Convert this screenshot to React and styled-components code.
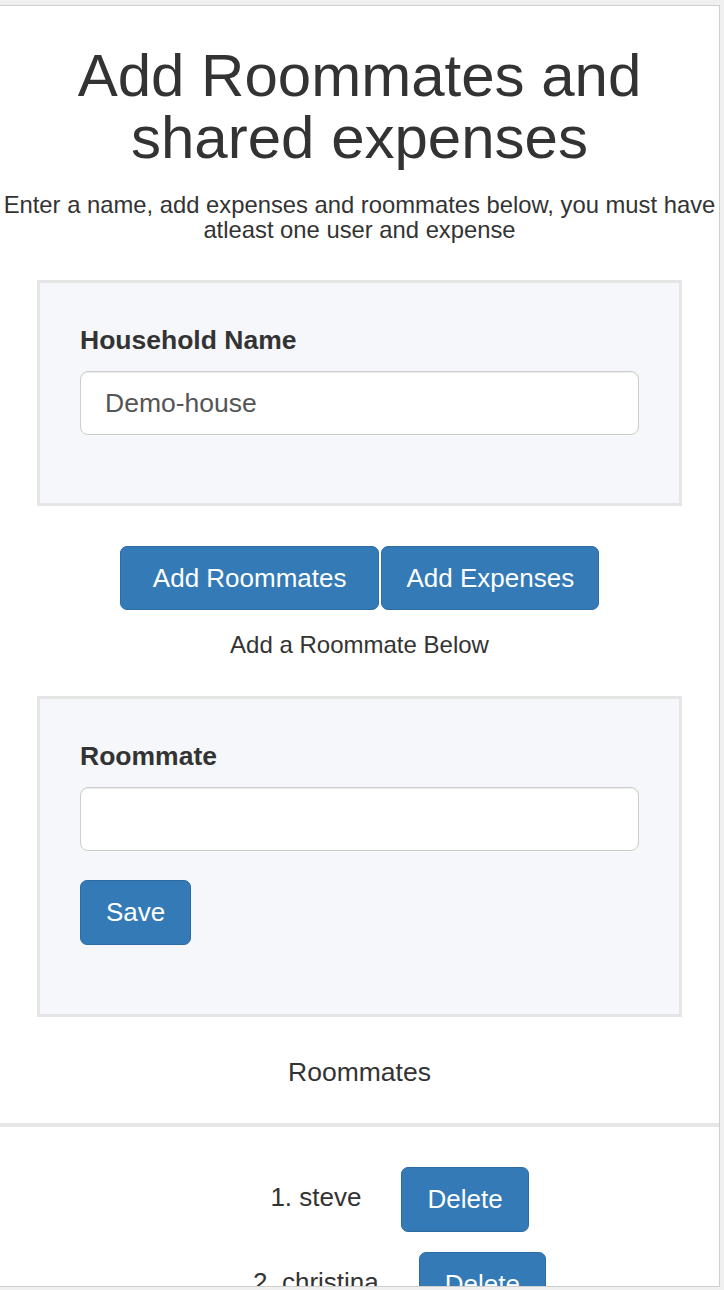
import styled, { createGlobalStyle } from "styled-components";

const GlobalStyle = createGlobalStyle`
  html, body {
    margin: 0;
    padding: 0;
    background: #f0f0f0;
  }
  * {
    box-sizing: border-box;
  }
`;

const Frame = styled.div`
  width: 720px;
  height: 1282px;
  margin-top: 5px;
  background: #fff;
  border-top: 1px solid #cfcfcf;
  border-right: 1px solid #cfcfcf;
  border-bottom: 1px solid #cfcfcf;
  overflow: hidden;
  font-family: "Liberation Sans", Arial, sans-serif;
  color: #333;
  text-align: center;
`;

const Title = styled.h1`
  margin: 39px 0 0;
  font-size: 60px;
  line-height: 62px;
  font-weight: 400;
`;

const Subtitle = styled.p`
  margin: 23px 0 0;
  font-size: 23.8px;
  line-height: 25px;
  white-space: nowrap;
`;

const Panel = styled.div`
  margin: ${({ $top }) => $top}px 37px 0;
  padding: 40px 40px ${({ $bottom }) => $bottom}px;
  background: #f6f7fb;
  border: 3px solid #e5e5e5;
  text-align: left;
`;

const Label = styled.label`
  display: block;
  font-size: 26.5px;
  line-height: 34px;
  font-weight: 700;
  margin-bottom: 14px;
`;

const Input = styled.input`
  display: block;
  width: 100%;
  height: 64px;
  padding: 0 24px;
  font-family: inherit;
  font-size: 26.5px;
  color: #555;
  background: #fff;
  border: 1.5px solid #ccc;
  border-radius: 8px;
  box-shadow: inset 0 1px 1px rgba(0, 0, 0, 0.075);
  outline: none;
`;

const Button = styled.button`
  display: inline-block;
  height: ${({ $h }) => $h || 64}px;
  padding: 0 ${({ $pad }) => $pad || 25}px;
  font-family: inherit;
  font-size: 26px;
  color: #fff;
  background: #337ab7;
  border: 1px solid #2e6da4;
  border-radius: 7px;
  vertical-align: middle;
  cursor: pointer;
`;

const ButtonGroup = styled.div`
  display: flex;
  justify-content: center;
  gap: 2px;
  margin-top: 40px;
`;

const Hint = styled.p`
  margin: 20px 0 0;
  font-size: 24px;
  line-height: 30px;
`;

const SectionTitle = styled.h3`
  margin: 40px 0 0;
  font-size: 26.5px;
  line-height: 30px;
  font-weight: 400;
`;

const Divider = styled.hr`
  margin: 36px 0 0;
  border: 0;
  height: 4px;
  background: #e6e6e6;
`;

const List = styled.ol`
  margin: 38px 0 0;
  padding: 0 0 0 80px;
  list-style: decimal inside;
`;

const Item = styled.li`
  font-size: 26px;
  line-height: 65px;
  height: 65px;
  margin-bottom: 20px;

  ${Button} {
    margin-left: 40px;
  }
`;

const roommates = ["steve", "christina"];

export default function App() {
  return (
    <>
      <GlobalStyle />
      <Frame>
        <Title>
          Add Roommates and
          <br />
          shared expenses
        </Title>
        <Subtitle>
          Enter a name, add expenses and roommates below, you must have
          <br />
          atleast one user and expense
        </Subtitle>

        <Panel $top={38} $bottom={68}>
          <Label>Household Name</Label>
          <Input defaultValue="Demo-house" />
        </Panel>

        <ButtonGroup>
          <Button $pad={32}>Add Roommates</Button>
          <Button $pad={24}>Add Expenses</Button>
        </ButtonGroup>
        <Hint>Add a Roommate Below</Hint>

        <Panel $top={36} $bottom={69}>
          <Label>Roommate</Label>
          <Input />
          <Button $h={65} style={{ marginTop: 29 }}>
            Save
          </Button>
        </Panel>

        <SectionTitle>Roommates</SectionTitle>
        <Divider />
        <List>
          {roommates.map((name) => (
            <Item key={name}>
              {name}
              <Button $h={65}>Delete</Button>
            </Item>
          ))}
        </List>
      </Frame>
    </>
  );
}
